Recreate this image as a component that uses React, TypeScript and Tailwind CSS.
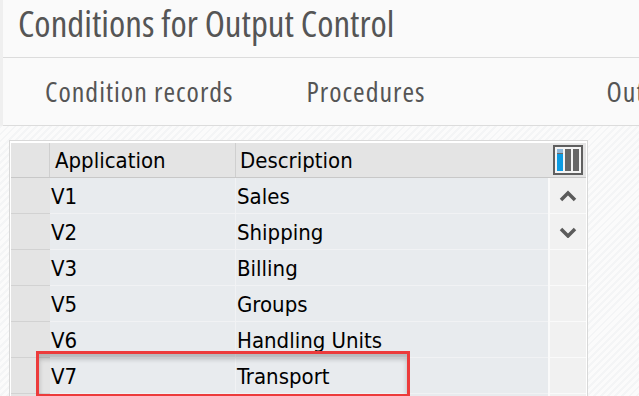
import React from "react";

const rows = [
  { app: "V1", desc: "Sales" },
  { app: "V2", desc: "Shipping" },
  { app: "V3", desc: "Billing" },
  { app: "V5", desc: "Groups" },
  { app: "V6", desc: "Handling Units" },
  { app: "V7", desc: "Transport" },
];

function ColumnsIcon() {
  return (
    <svg width="30" height="30" viewBox="0 0 30 30">
      <rect x="1" y="1" width="28" height="28" fill="#f4f4f4" stroke="#5f5f5f" strokeWidth="2" />
      <rect x="4" y="4" width="6" height="22" fill="#6a6a6a" />
      <rect x="4" y="4" width="6" height="4" fill="#8fb8d8" />
      <rect x="4" y="9" width="6" height="17" fill="#0d9ce3" />
      <rect x="12" y="4" width="6" height="22" fill="#666" />
      <rect x="20" y="4" width="6" height="22" fill="#666" />
    </svg>
  );
}

function Chevron({ up }: { up?: boolean }) {
  return (
    <svg width="18" height="12" viewBox="0 0 18 12">
      <path
        d={up ? "M2 10 L9 3 L16 10" : "M2 3 L9 10 L16 3"}
        fill="none"
        stroke="#5b5b5b"
        strokeWidth="3.5"
      />
    </svg>
  );
}

export default function App() {
  return (
    <div className="relative h-[396px] w-[639px] overflow-hidden bg-[#fafafa] font-['Open_Sans','DejaVu_Sans',sans-serif]">
      <div className="border-l-[3px] border-[#efefef]">
        <div className="h-[58px] border-b border-[#dcdcdc] pl-[15px]">
          <h1 className="text-[37px] leading-[46px] text-[#555] font-stretch-[75%]">
            Conditions for Output Control
          </h1>
        </div>
        <div className="flex h-[68px] items-start overflow-hidden whitespace-nowrap border-b border-[#dcdcdc] pl-[42px] pt-[15px] text-[28px] leading-[36px] tracking-[1px] text-[#555] font-stretch-[75%]">
          <span>Condition records</span>
          <span className="ml-[73px]">Procedures</span>
          <span className="ml-[181px]">Output Types</span>
        </div>
      </div>

      <div className="flex h-full bg-[repeating-linear-gradient(135deg,#f4f5f6_0px,#f4f5f6_2px,#fbfbfb_2px,#fbfbfb_5px)] pl-[9px] pt-[14px]">
        <div className="w-[579px] border border-[#d8d8d8] bg-white pl-[1px] pr-[1px] pt-[2px] font-['DejaVu_Sans_Condensed','DejaVu_Sans',sans-serif] text-[22px] text-black">
          <div className="grid h-[35px] grid-cols-[39px_186px_1fr_38px] border-b border-[#c8c8c8] bg-[#e4e4e4]">
            <div className="border-r border-[#cfcfcf]" />
            <div className="flex items-center border-r border-[#cfcfcf] pl-[5px]">Application</div>
            <div className="flex items-center pl-[4px]">Description</div>
            <div className="flex items-center justify-center pl-[1px]">
              <ColumnsIcon />
            </div>
          </div>
          {rows.concat([{ app: "", desc: "" }]).map((r, i) => (
            <div key={i} className="grid h-[36px] grid-cols-[39px_186px_1fr_38px]">
              <div className="border-b border-[#d2d2d2] bg-[#e4e4e4]" />
              <div className="flex items-center border-b border-r border-[#f1f2f4] bg-[#e8ebee] pl-[1px] pt-[2px]">{r.app}</div>
              <div className="flex items-center border-b border-[#f1f2f4] bg-[#e8ebee] pl-[1px] pt-[2px]">{r.desc}</div>
              <div className="flex items-center justify-center border-b border-l-2 border-[#fafafa] bg-[#f1f1f1]">
                {i === 0 && <Chevron up />}
                {i === 1 && <Chevron />}
              </div>
            </div>
          ))}
        </div>
      </div>

      <div className="absolute left-[36px] top-[351px] h-[46px] w-[374px] border-[3px] border-[#ec3b3b] shadow-[inset_0_5px_5px_rgba(0,0,0,0.22)]" />
    </div>
  );
}
